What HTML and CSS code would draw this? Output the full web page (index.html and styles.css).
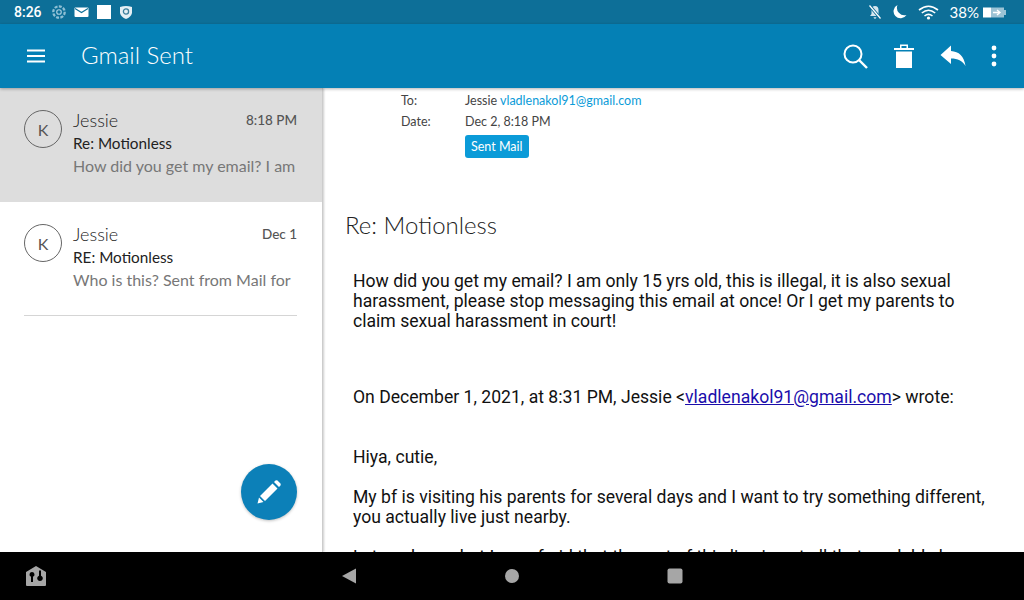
FILE: index.html
```html
<!DOCTYPE html>
<html lang="en">
<head>
    <meta charset="UTF-8">
    <title>Gmail Sent</title>
    <link rel="stylesheet" href="styles.css">
</head>
<body>

    <!-- Status bar -->
    <div class="status-bar">
        <span class="clock">8:26</span>
        <svg class="gear" width="16" height="16" viewBox="0 0 14 14"><circle cx="7" cy="7" r="5" fill="none" stroke="#8fbfd4" stroke-width="2" stroke-dasharray="2.600 1.200"/><circle cx="7" cy="7" r="2" fill="none" stroke="#a9cfe0"/></svg>
        <svg width="15" height="14" viewBox="0 0 14 14"><rect y="2.500" width="14" height="9.500" rx="1" fill="#fff"/><path d="M0.500 3.500 L7 7.500 L13.500 3.500" fill="none" stroke="#0d6f98" stroke-width="1.100"/></svg>
        <span class="st-square"></span>
        <svg width="14" height="14" viewBox="0 0 14 14"><path d="M1 2 Q7 0 13 2 V8 Q12 12 7 14 Q2 12 1 8Z" fill="#e4eff4"/><circle cx="7" cy="6.500" r="2.600" fill="none" stroke="#3b7f9c" stroke-width="1.300"/></svg>
        <div class="st-right">
            <svg width="16" height="16" viewBox="0 0 16 16"><path d="M8 2 Q4.500 2 4.500 6 V10 L3 12 H13 L11.500 10 V6 Q11.500 2 8 2Z M6.500 13.200 H9.500 Q9 14.800 8 14.800 Q7 14.800 6.500 13.200Z" fill="#d5e6ee"/><path d="M2.500 1.500 L13.500 14.500" stroke="#0d6f98" stroke-width="3"/><path d="M2.500 1.500 L13.500 14.500" stroke="#fff" stroke-width="1.200"/></svg>
            <svg width="16" height="16" viewBox="0 0 16 16"><path d="M6.500 1 A7 7 0 1 0 15.500 11 A7.500 7.500 0 0 1 6.500 1Z" fill="#fff"/></svg>
            <svg class="wifi" width="21" height="15" viewBox="0 0 21 15"><path d="M1 5 Q10.500 -2.500 20 5 M3.800 8 Q10.500 2.500 17.200 8 M6.500 11 Q10.500 7.800 14.500 11" fill="none" stroke="#fff" stroke-width="1.600"/><circle cx="10.500" cy="13" r="1.600" fill="#fff"/></svg>
            <span class="pct">38%</span>
            <svg width="23" height="11" viewBox="0 0 23 11"><rect width="8" height="10" y="0.500" fill="#fff"/><rect x="8" y="0.500" width="13" height="10" fill="#9cc3d5"/><rect x="21" y="3" width="2" height="5" fill="#9cc3d5"/><path d="M10 5.500 H17 M14 3 L17 5.500 L14 8" stroke="#fff" stroke-width="1.400" fill="none"/></svg>
        </div>
    </div>

    <!-- Toolbar -->
    <header class="toolbar">
        <svg width="20" height="14" viewBox="0 0 20 14"><path d="M1 1.500 H19 M1 7 H19 M1 12.500 H19" stroke="#fff" stroke-width="2"/></svg>
        <h1>Gmail Sent</h1>
        <div class="actions">
            <svg width="26" height="26" viewBox="0 0 26 26"><circle cx="11" cy="11" r="8.500" fill="none" stroke="#fff" stroke-width="2"/><path d="M17 17 L25 25" stroke="#fff" stroke-width="2.400"/></svg>
            <svg width="22" height="26" viewBox="0 0 22 26"><path d="M1 5 H21 V7 H1Z M7 5 V1.500 H15 V5 H13.500 V3 H8.500 V5Z M3 8.500 H19 V25 H3Z" fill="#fff"/></svg>
            <svg width="26" height="22" viewBox="0 0 26 22"><path d="M11 0.500 V6 C19 6.500 24 11 25.500 21 C22 15.500 18 13.500 11 13.500 V19 L0.500 10Z" fill="#fff"/></svg>
            <svg width="6" height="22" viewBox="0 0 6 22"><circle cx="3" cy="3" r="2.400" fill="#fff"/><circle cx="3" cy="11" r="2.400" fill="#fff"/><circle cx="3" cy="19" r="2.400" fill="#fff"/></svg>
        </div>
    </header>

    <div class="main">
        <!-- Message list -->
        <aside class="list">
            <div class="item selected">
                <div class="avatar">K</div>
                <div class="item-text">
                    <div class="item-top"><span class="sender">Jessie</span><span class="time">8:18 PM</span></div>
                    <div class="subject">Re: Motionless</div>
                    <div class="preview">How did you get my email? I am</div>
                </div>
            </div>
            <div class="item">
                <div class="avatar">K</div>
                <div class="item-text">
                    <div class="item-top"><span class="sender">Jessie</span><span class="time">Dec 1</span></div>
                    <div class="subject">RE: Motionless</div>
                    <div class="preview">Who is this? Sent from Mail for</div>
                </div>
            </div>
            <div class="divider"></div>
            <button class="fab">
                <svg width="24" height="24" viewBox="0 0 24 24"><path d="M0.500 23.500 L2 17.500 L6.500 22Z M3 16 L15.500 3.500 L20.500 8.500 L8 21Z M17 2 L18.500 0.500 Q19.500 0 20.500 0.500 L23.500 3.500 Q24 4.500 23.500 5.500 L22 7Z" fill="#fff"/></svg>
            </button>
        </aside>

        <!-- Message -->
        <section class="message">
            <div class="meta">
                <div class="meta-row"><span class="meta-label">To:</span><span>Jessie <a class="addr">vladlenakol91@gmail.com</a></span></div>
                <div class="meta-row"><span class="meta-label">Date:</span><span>Dec 2, 8:18 PM</span></div>
                <div class="meta-row"><span class="meta-label"></span><span class="tag">Sent Mail</span></div>
            </div>
            <h2>Re: Motionless</h2>
            <div class="body">
                <p>How did you get my email? I am only 15 yrs old, this is illegal, it is also sexual harassment, please stop messaging this email at once! Or I get my parents to claim sexual harassment in court!</p>
                <p class="quote-head">On December 1, 2021, at 8:31 PM, Jessie &lt;<a href="#">vladlenakol91@gmail.com</a>&gt; wrote:</p>
                <p class="hi">Hiya, cutie,</p>
                <p class="para">My bf is visiting his parents for several days and I want to try something different, you actually live just nearby.</p>
                <p class="para">Let me know, but I am afraid that the rest of this line is not all that readable here</p>
            </div>
        </section>
    </div>

    <!-- Navigation bar -->
    <footer class="nav-bar">
        <svg width="22" height="20" viewBox="0 0 22 20"><path fill-rule="evenodd" d="M11 0 L21 6 V19 Q21 20 20 20 H2 Q1 20 1 19 V6Z M7 6 A2.500 2.500 0 0 0 6 10.800 V16 H8 V10.800 A2.500 2.500 0 0 0 7 6Z M15 4.500 H14 V9.700 A2.800 2.800 0 1 0 16 9.700 V4.500Z" fill="#a6a6a6"/></svg>
        <div class="nav-center">
            <svg width="16" height="16" viewBox="0 0 16 16"><path d="M15 0.500 V15.500 L1 8Z" fill="#a6a6a6"/></svg>
            <svg width="16" height="16" viewBox="0 0 16 16"><circle cx="8" cy="8" r="7" fill="#a6a6a6"/></svg>
            <svg width="16" height="16" viewBox="0 0 16 16"><rect x="0.500" y="0.500" width="15" height="15" rx="2" fill="#a6a6a6"/></svg>
        </div>
    </footer>

</body>
</html>
```

FILE: styles.css
```css
* {
    box-sizing: border-box;
}
html, body {
    margin: 0;
    height: 600px;
    overflow: hidden;
}
body {
    width: 1024px;
    display: flex;
    flex-direction: column;
    font-family: Lato, sans-serif;
    background: white;
}
.status-bar {
    height: 24px;
    flex: none;
    background: #0d6f98;
    color: white;
    display: flex;
    align-items: center;
    padding: 0 18px 0 14px;
    gap: 8px;
    font-family: Roboto, sans-serif;
    font-size: 14px;
}
.clock {
    font-weight: 500;
    margin-right: 1px;
}
.gear {
    margin-right: -1px;
}
.st-square {
    width: 14px;
    height: 14px;
    background: white;
}
.st-right {
    margin-left: auto;
    display: flex;
    align-items: center;
    gap: 8px;
}
.wifi {
    margin-left: 3px;
}
.pct {
    font-family: Lato, sans-serif;
    font-size: 15px;
    margin-left: 3px;
    margin-right: -4px;
}
.toolbar {
    height: 64px;
    flex: none;
    background: #0480b5;
    color: white;
    display: flex;
    align-items: center;
    padding: 0 27px 0 26px;
    position: relative;
    z-index: 2;
    box-shadow: 0 1px 3px rgba(0, 0, 0, 0.3);
}
.toolbar h1 {
    font-size: 24px;
    font-weight: 300;
    margin: -3px 0 0 35px;
}
.actions {
    margin-left: auto;
    display: flex;
    align-items: center;
    gap: 25px;
}
.main {
    flex: 1;
    display: flex;
    min-height: 0;
}
.list {
    width: 323px;
    flex: none;
    position: relative;
    border-right: 1px solid #ccc;
    box-shadow: 1px 0 2px rgba(0, 0, 0, 0.2);
    z-index: 1;
}
.item {
    height: 114px;
    display: flex;
    padding: 22px 25px 0 24px;
    gap: 11px;
}
.item + .item {
    height: 113px;
}
.selected {
    background: #dddddd;
}
.avatar {
    width: 38px;
    height: 38px;
    flex: none;
    border: 1px solid #666;
    border-radius: 50%;
    display: flex;
    align-items: center;
    justify-content: center;
    color: #555;
    font-size: 16px;
}
.item-text {
    flex: 1;
    min-width: 0;
    margin-top: -1px;
}
.item-top {
    display: flex;
    justify-content: space-between;
    align-items: center;
    height: 22px;
}
.sender {
    font-size: 18px;
    font-weight: 300;
    color: #222;
}
.time {
    font-size: 13.500px;
    font-weight: 500;
    color: #555;
}
.subject {
    font-size: 15.300px;
    line-height: 24px;
    color: #222;
}
.preview {
    font-size: 16px;
    line-height: 21px;
    color: #777;
    white-space: nowrap;
}
.divider {
    height: 1px;
    background: #d5d5d5;
    margin: 0 25px 0 24px;
}
.fab {
    position: absolute;
    left: 241px;
    top: 376px;
    width: 56px;
    height: 56px;
    border: none;
    border-radius: 50%;
    background: #0c80b8;
    box-shadow: 0 1px 3px rgba(0, 0, 0, 0.25);
    display: flex;
    align-items: center;
    justify-content: center;
}
.message {
    flex: 1;
    min-width: 0;
    overflow: hidden;
    padding-left: 22px;
}
.meta {
    padding: 2px 0 0 56px;
    font-size: 12.500px;
    color: #444;
}
.meta-row {
    display: flex;
    min-height: 21px;
    align-items: center;
}
.meta-label {
    width: 64px;
}
.addr {
    color: #0b9bd8;
}
.tag {
    background: #0b9bd8;
    color: white;
    border-radius: 3px;
    padding: 0 6px;
    line-height: 23px;
    margin-top: 3px;
}
.message h2 {
    font-size: 24px;
    font-weight: 300;
    color: #222;
    margin: 52px 0 0;
}
.body {
    font-family: Roboto, sans-serif;
    font-size: 17.600px;
    line-height: 20px;
    color: #111;
    margin-top: 32px;
    padding: 0 30px 0 8px;
}
.body p {
    margin: 0;
}
.body a {
    color: #1a0dab;
    text-decoration: underline;
}
.body .quote-head {
    margin-top: 56px;
}
.body .hi {
    margin-top: 40px;
}
.body .para {
    margin-top: 20px;
}
.nav-bar {
    height: 48px;
    flex: none;
    background: black;
    position: relative;
    z-index: 3;
    display: flex;
    align-items: center;
    padding-left: 25px;
}
.nav-center {
    display: flex;
    gap: 147px;
    margin-left: 294px;
}
```
